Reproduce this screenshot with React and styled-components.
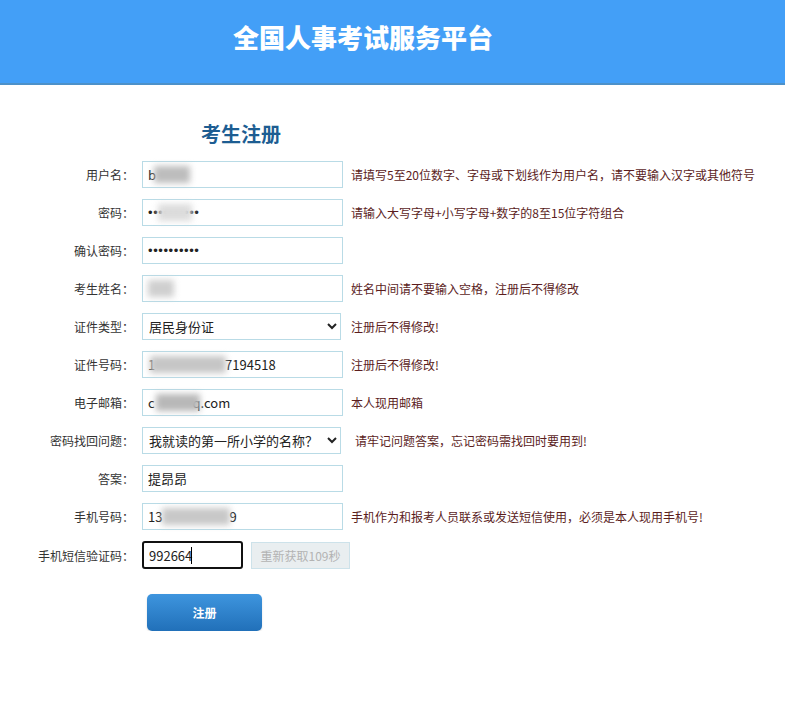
import React from "react";
import styled, { createGlobalStyle } from "styled-components";

const GlobalStyle = createGlobalStyle`
    html, body {
        margin: 0;
        padding: 0;
        background: #ffffff;
        font-family: "Noto Sans CJK SC", "Microsoft YaHei", sans-serif;
    }
`;

const Header = styled.header`
    height: 85px;
    background-color: #439ff7;
    border-bottom: 2px solid #4d91c9;
    box-sizing: border-box;
    padding: 17px 0 0 233px;
`;

const SiteTitle = styled.h1`
    margin: 0;
    font-size: 26px;
    line-height: 40px;
    font-weight: 900;
    color: #ffffff;
`;

const Main = styled.main`
    padding-top: 35px;
`;

const FormTitle = styled.h2`
    margin: 0 0 13px 201px;
    font-size: 20px;
    line-height: 28px;
    font-weight: 700;
    color: #1d5d92;
`;

const Form = styled.form`
    display: grid;
    grid-template-columns: 134px 201px auto;
    column-gap: 8px;
    row-gap: 11px;
    align-items: center;
`;

const Label = styled.label`
    font-size: 12px;
    color: #333333;
    text-align: right;
    white-space: nowrap;
`;

const Field = styled.div`
    position: relative;
    display: flex;
    gap: 8px;
    align-items: center;
`;

const Input = styled.input`
    box-sizing: border-box;
    flex-shrink: 0;
    width: ${p => p.$width || 201}px;
    height: ${p => (p.$focused ? 28 : 27)}px;
    padding: 0 5px;
    border: ${p => (p.$focused ? "2px solid #111111" : "1px solid #b9dbe6")};
    border-radius: ${p => (p.$focused ? 3 : 0)}px;
    outline: none;
    font-family: ${p => (p.type === "password" ? '"Liberation Sans", sans-serif' : '"Noto Sans CJK SC", sans-serif')};
    font-size: 13px;
    color: #222222;
    background: #ffffff;
    letter-spacing: ${p => (p.type === "password" ? "0.6px" : "0")};
    white-space: pre;
`;

const Select = styled.select`
    box-sizing: border-box;
    width: 199px;
    height: 27px;
    padding: 0 2px;
    border: 1px solid #b9dbe6;
    border-radius: 0;
    font-family: "Noto Sans CJK SC", sans-serif;
    font-size: 13px;
    color: #222222;
    background: #ffffff;
    outline: none;
`;

const Blur = styled.span`
    position: absolute;
    top: 5px;
    height: 17px;
    background: #bdbdbd;
    filter: blur(3px);
    pointer-events: none;
`;

const Hint = styled.span`
    font-size: 12px;
    color: #5b1d1d;
    white-space: nowrap;
    padding-left: ${p => p.$pad || 0}px;
`;

const ResendButton = styled.button`
    box-sizing: border-box;
    flex-shrink: 0;
    width: 99px;
    height: 27px;
    border: 1px solid #cde2ea;
    background: #e9eef0;
    color: #b3b3b3;
    font-family: "Noto Sans CJK SC", sans-serif;
    font-size: 12px;
    padding: 0;
`;

const Actions = styled.div`
    padding: 25px 0 0 147px;
`;

const SubmitButton = styled.button`
    width: 115px;
    height: 37px;
    border: none;
    border-radius: 5px;
    background: linear-gradient(#3e95de, #2170b9);
    color: #ffffff;
    font-family: "Noto Sans CJK SC", sans-serif;
    font-size: 12px;
    font-weight: 700;
    box-shadow: 0 1px 2px rgba(0, 0, 0, 0.15);
`;

const Caret = styled.span`
    position: absolute;
    left: 49px;
    top: 6px;
    width: 1px;
    height: 17px;
    background: #000;
`;

const gap = n => " ".repeat(n);

const App = () => (
    <>
        <GlobalStyle />
        <Header>
            <SiteTitle>全国人事考试服务平台</SiteTitle>
        </Header>
        <Main>
            <FormTitle>考生注册</FormTitle>
            <Form onSubmit={e => e.preventDefault()}>
                <Label>用户名：</Label>
                <Field>
                    <Input defaultValue="b" />
                    <Blur style={{ left: 12, width: 36 }} />
                </Field>
                <Hint>请填写5至20位数字、字母或下划线作为用户名，请不要输入汉字或其他符号</Hint>

                <Label>密码：</Label>
                <Field>
                    <Input type="password" defaultValue="abcdefgh12" />
                    <Blur style={{ left: 16, width: 34, background: "#dcdcdc" }} />
                </Field>
                <Hint>请输入大写字母+小写字母+数字的8至15位字符组合</Hint>

                <Label>确认密码：</Label>
                <Field>
                    <Input type="password" defaultValue="abcdefgh12" />
                </Field>
                <span />

                <Label>考生姓名：</Label>
                <Field>
                    <Input defaultValue="" />
                    <Blur style={{ left: 6, width: 26, background: "#cfcfcf" }} />
                </Field>
                <Hint>姓名中间请不要输入空格，注册后不得修改</Hint>

                <Label>证件类型：</Label>
                <Field>
                    <Select defaultValue="id">
                        <option value="id">居民身份证</option>
                        <option value="passport">护照</option>
                    </Select>
                </Field>
                <Hint>注册后不得修改!</Hint>

                <Label>证件号码：</Label>
                <Field>
                    <Input defaultValue={"1" + gap(24) + "7194518"} />
                    <Blur style={{ left: 8, width: 76, background: "#c6c6c6" }} />
                </Field>
                <Hint>注册后不得修改!</Hint>

                <Label>电子邮箱：</Label>
                <Field>
                    <Input defaultValue={"c" + gap(13) + "q.com"} />
                    <Blur style={{ left: 14, width: 44, background: "#b8b8b8" }} />
                </Field>
                <Hint>本人现用邮箱</Hint>

                <Label>密码找回问题：</Label>
                <Field>
                    <Select defaultValue="q1">
                        <option value="q1">我就读的第一所小学的名称？</option>
                        <option value="q2">我的出生地是？</option>
                    </Select>
                </Field>
                <Hint $pad={4}>请牢记问题答案，忘记密码需找回时要用到!</Hint>

                <Label>答案：</Label>
                <Field>
                    <Input defaultValue="提昂昂" />
                </Field>
                <span />

                <Label>手机号码：</Label>
                <Field>
                    <Input defaultValue={"13" + gap(23) + "9"} />
                    <Blur style={{ left: 20, width: 68, background: "#c8c8c8" }} />
                </Field>
                <Hint>手机作为和报考人员联系或发送短信使用，必须是本人现用手机号!</Hint>

                <Label>手机短信验证码：</Label>
                <Field>
                    <Input $width={101} $focused defaultValue="992664" />
                    <Caret />
                    <ResendButton type="button" disabled>重新获取109秒</ResendButton>
                </Field>
                <span />
            </Form>
            <Actions>
                <SubmitButton type="submit">注册</SubmitButton>
            </Actions>
        </Main>
    </>
);

export default App;
